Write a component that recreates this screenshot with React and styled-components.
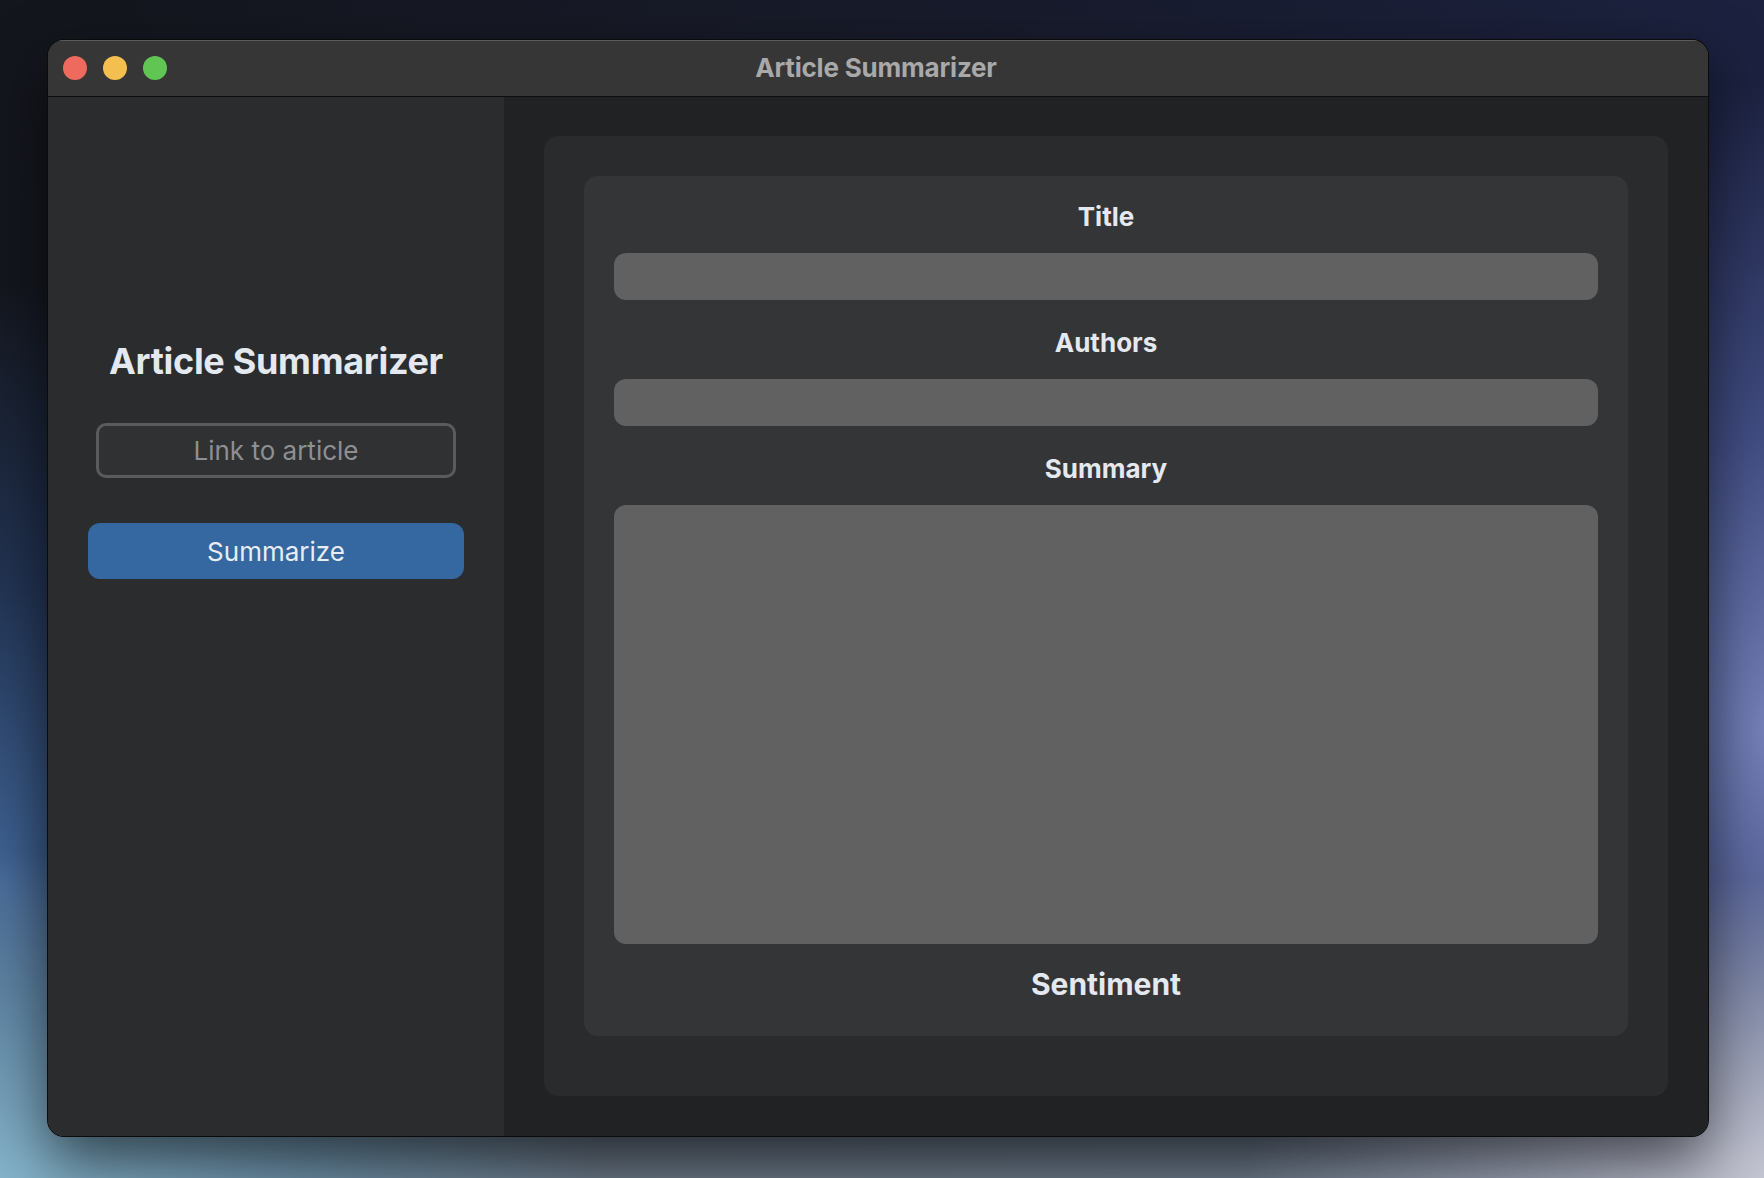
import React, { useState } from 'react';
import styled, { createGlobalStyle } from 'styled-components';

const GlobalStyle = createGlobalStyle`
  html, body {
    margin: 0;
    padding: 0;
    height: 100%;
  }
  body {
    font-family: Inter, "Noto Sans", "Liberation Sans", sans-serif;
    background-color: #1a1d2c;
    background-image:
      radial-gradient(ellipse 520px 300px at 100% 100%, #c4c5d3 0%, rgba(185, 187, 205, 0.55) 50%, rgba(150, 155, 190, 0) 100%),
      radial-gradient(ellipse 600px 320px at 0% 100%, #84b3ca 0%, rgba(110, 160, 190, 0.6) 50%, rgba(60, 90, 140, 0) 100%),
      linear-gradient(to bottom, rgba(0, 0, 0, 0) 0%, rgba(0, 0, 0, 0) 72%, rgba(120, 135, 150, 0.85) 100%),
      radial-gradient(ellipse 420px 650px at 100% 62%, #7480b8 0%, rgba(85, 100, 165, 0.65) 45%, rgba(30, 40, 80, 0) 100%),
      radial-gradient(ellipse 420px 600px at 0% 75%, #416597 0%, rgba(45, 75, 125, 0.55) 50%, rgba(20, 25, 40, 0) 100%),
      linear-gradient(100deg, #14161d 0%, #181b2b 50%, #1d2345 100%);
  }
  #root {
    height: 100%;
  }
`;

const Desktop = styled.div`
  box-sizing: border-box;
  height: 1178px;
  padding: 40px 56px 42px 48px;
  display: flex;
`;

const Window = styled.div`
  flex: 1;
  display: flex;
  flex-direction: column;
  border-radius: 16px;
  overflow: hidden;
  background: #2b2c2e;
  box-shadow:
    0 0 0 1px #0b0b0b,
    inset 0 0 0 1px rgba(255, 255, 255, 0.16),
    0 24px 60px rgba(0, 0, 0, 0.6);
`;

const TitleBar = styled.div`
  position: relative;
  box-sizing: border-box;
  height: 57px;
  flex-shrink: 0;
  display: flex;
  align-items: center;
  justify-content: center;
  background: #363636;
  border-top: 1px solid #5b5b5b;
  border-bottom: 1px solid #0e0e0e;
`;

const Lights = styled.div`
  position: absolute;
  left: 15px;
  top: 15px;
  display: flex;
  gap: 16px;
`;

const Light = styled.span`
  width: 24px;
  height: 24px;
  border-radius: 50%;
  background: ${(props) => props.color};
`;

const WindowTitle = styled.div`
  font-size: 26px;
  font-weight: 700;
  color: #a9a9a9;
  letter-spacing: -0.2px;
  margin-left: -4px;
  margin-top: -2px;
`;

const Body = styled.div`
  flex: 1;
  display: grid;
  grid-template-columns: 456px 1fr;
  min-height: 0;
`;

const Sidebar = styled.div`
  background: #2b2c2e;
  display: flex;
  flex-direction: column;
  align-items: center;
  padding-top: 242px;
`;

const SideHeading = styled.h1`
  margin: 0 0 40px;
  font-size: 36px;
  line-height: 44px;
  font-weight: 700;
  color: #e4e8ef;
  letter-spacing: -0.3px;
`;

const LinkInput = styled.input`
  box-sizing: border-box;
  width: 360px;
  height: 55px;
  margin-bottom: 45px;
  border: 3px solid #5a5b5e;
  border-radius: 10px;
  background: #303133;
  color: #e4e8ef;
  font-family: inherit;
  font-size: 26px;
  text-align: center;
  outline: none;

  &::placeholder {
    color: #8e8f92;
  }
`;

const SummarizeButton = styled.button`
  width: 376px;
  height: 56px;
  border: none;
  border-radius: 12px;
  background: #3568a0;
  color: #e8edf4;
  font-family: inherit;
  font-size: 26px;
  cursor: pointer;
`;

const Content = styled.div`
  background: #212224;
  padding: 39px 40px 40px;
  display: flex;
`;

const Panel = styled.div`
  flex: 1;
  background: #2a2b2d;
  border-radius: 14px;
  padding: 40px 40px 60px;
  display: flex;
`;

const Card = styled.div`
  flex: 1;
  background: #343537;
  border-radius: 14px;
  padding: 27px 30px 36px;
  display: flex;
  flex-direction: column;
  align-items: stretch;
`;

const Label = styled.div`
  text-align: center;
  font-size: ${(props) => (props.big ? '30px' : '26px')};
  line-height: ${(props) => (props.big ? '32px' : '28px')};
  font-weight: 700;
  color: #e4e8ef;
  margin-bottom: ${(props) => (props.big ? '0' : '22px')};
`;

const Field = styled.div`
  height: ${(props) => props.h}px;
  background: #616161;
  border-radius: 12px;
  margin-bottom: ${(props) => props.gap}px;
  flex-shrink: 0;
`;

const App = () => {
  const [link, setLink] = useState('');

  return (
    <>
      <GlobalStyle />
      <Desktop>
        <Window>
          <TitleBar>
            <Lights>
              <Light color="#ee6a5f" />
              <Light color="#f5bf4f" />
              <Light color="#61c554" />
            </Lights>
            <WindowTitle>Article Summarizer</WindowTitle>
          </TitleBar>
          <Body>
            <Sidebar>
              <SideHeading>Article Summarizer</SideHeading>
              <LinkInput
                placeholder="Link to article"
                value={link}
                onChange={(e) => setLink(e.target.value)}
              />
              <SummarizeButton>Summarize</SummarizeButton>
            </Sidebar>
            <Content>
              <Panel>
                <Card>
                  <Label>Title</Label>
                  <Field h={47} gap={29} />
                  <Label>Authors</Label>
                  <Field h={47} gap={29} />
                  <Label>Summary</Label>
                  <Field h={439} gap={24} />
                  <Label big>Sentiment</Label>
                </Card>
              </Panel>
            </Content>
          </Body>
        </Window>
      </Desktop>
    </>
  );
};

export default App;
